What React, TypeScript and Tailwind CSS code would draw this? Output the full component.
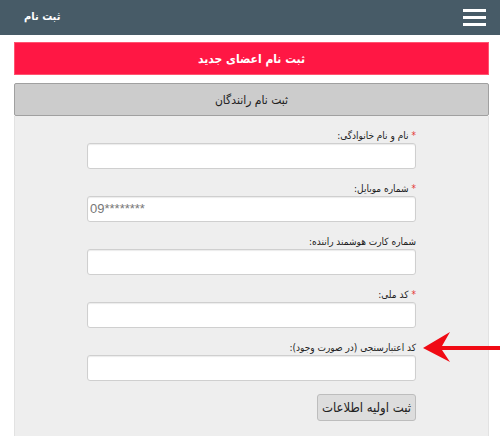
import React from "react";

const fields = [
  { label: "نام و نام خانوادگی:", req: true, ph: "" },
  { label: "شماره موبایل:", req: true, ph: "09********" },
  { label: "شماره کارت هوشمند راننده:", req: false, ph: "" },
  { label: "کد ملی:", req: true, ph: "" },
  { label: "کد اعتبارسنجی (در صورت وجود):", req: false, ph: "" },
];

export default function App() {
  return (
    <div
      dir="rtl"
      className="relative w-[500px] h-[436px] overflow-hidden bg-white"
      style={{ fontFamily: "'DejaVu Sans Condensed', 'DejaVu Sans', sans-serif" }}
    >
      <header className="h-[35px] bg-[#475b67] flex items-center justify-between pr-[14px] pl-[24px]">
        <div className="flex flex-col gap-[4px] w-[23px]">
          <span className="block h-[3px] bg-white" />
          <span className="block h-[3px] bg-white" />
          <span className="block h-[3px] bg-white" />
        </div>
        <span className="text-white font-bold text-[11px]">ثبت نام</span>
      </header>
      <div className="pr-[11px] pl-[14px] pt-[7px]">
        <div className="h-[33px] bg-[#ff1744] border border-[#ff5470] flex items-center justify-center text-white font-bold text-[12px]">
          ثبت نام اعضای جدید
        </div>
        <div className="mt-[8px] h-[33px] bg-[#cccccc] border border-[#a0a0a0] rounded-[2px] flex items-center justify-center text-[#222] text-[12px]">
          ثبت نام رانندگان
        </div>
        <div className="bg-[#eeeeee] border-x border-[#e2e2e2] h-[400px] pt-[13px] pr-[72px] pl-[72px]">
          {fields.map((f, i) => (
            <div key={i} className="mb-[13px]">
              <div className="h-[14px] flex items-center text-[10px] text-[#222] leading-[14px]">
                {f.req && <span className="text-[#e53935] ml-[3px]">*</span>}
                <span>{f.label}</span>
              </div>
              <div
                className="h-[26px] bg-white border border-[#cfcfcf] rounded-[3px] shadow-[inset_0_1px_1px_rgba(0,0,0,0.08)] flex items-center px-[2px] text-[13px] text-[#777]"
                dir="ltr"
                style={{ fontFamily: "'Liberation Sans', Arial, sans-serif" }}
              >
                {f.ph}
              </div>
            </div>
          ))}
          <div className="flex">
            <button className="h-[27px] px-[4px] bg-[#dddddd] border border-[#bdbdbd] rounded-[3px] text-[13px] text-[#222]">
              ثبت اولیه اطلاعات
            </button>
          </div>
        </div>
      </div>
      <svg className="absolute left-[420px] top-[330px]" width="80" height="34" viewBox="0 0 80 34">
        <path d="M3 18 L30 2 L22 16 L80 16 L80 20 L22 20 L30 32 Z" fill="#f00a14" />
      </svg>
    </div>
  );
}
